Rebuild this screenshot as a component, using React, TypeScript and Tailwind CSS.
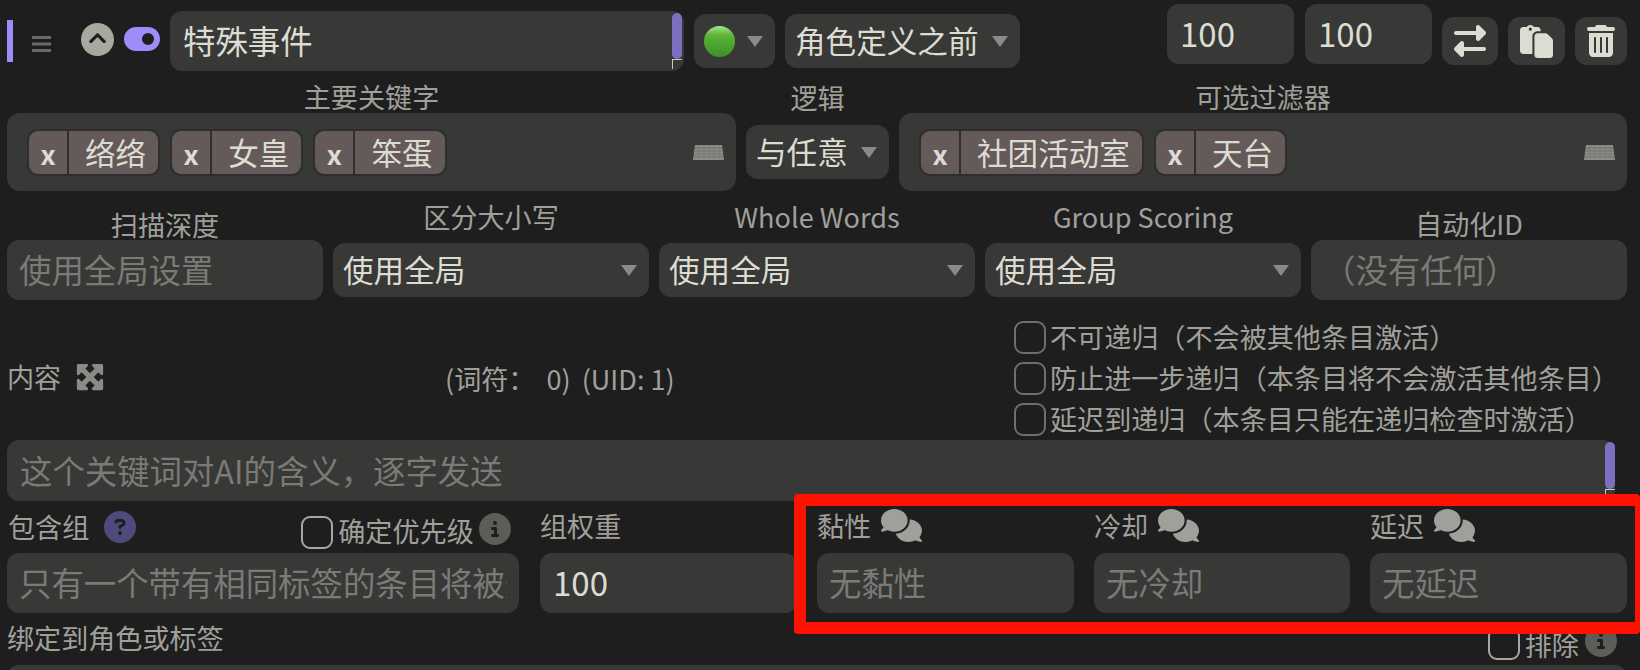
import React from "react";
import { FaCircleChevronUp, FaToggleOn, FaRightLeft, FaPaste, FaTrashCan, FaMaximize, FaCircleQuestion, FaCircleInfo, FaComments } from "react-icons/fa6";

function Arrow() {
  return (
    <svg width="16" height="11" viewBox="0 0 16 11" className="shrink-0">
      <polygon points="0,0 16,0 8,11" fill="#8a8a88" />
    </svg>
  );
}

function Keyboard() {
  return (
    <svg width="31" height="15" viewBox="0 0 31 15" className="shrink-0">
      <polygon points="2,0 29,0 31,15 0,15" fill="#8c8c88" />
      <path d="M2 3h27M2 6h27M1.500 9h28M1 12h29" stroke="#6f6f6c" strokeWidth="1" />
      <path d="M6 0v12M11 0v12M16 0v12M21 0v12M26 0v12" stroke="#777774" strokeWidth="0.700" />
    </svg>
  );
}

function Chip({ text }: { text: string }) {
  return (
    <div className="flex h-[43px] rounded-[9px] bg-[#645a5a] ring-2 ring-[#2e2e2e] text-[#dcdcd2] text-[30.6px] leading-[43px] overflow-hidden">
      <span className="w-[40px] border-r-2 border-[#2e2e2e] flex items-center justify-center font-bold text-[27px] pt-[3px]">x</span>
      <span className="pl-[16px] pr-[12px]">{text}</span>
    </div>
  );
}

function TagBox({ chips, width }: { chips: string[]; width: string }) {
  return (
    <div className={`${width} h-[78px] rounded-[13px] bg-[#383836] flex items-center gap-[14px] pl-[22px] pr-[12px]`}>
      {chips.map((c) => (
        <Chip key={c} text={c} />
      ))}
      <div className="ml-auto">
        <Keyboard />
      </div>
    </div>
  );
}

function Select({ text }: { text: string }) {
  return (
    <div className="w-[316px] h-[54px] mb-[3px] rounded-[12px] bg-[#383836] flex items-center justify-between pl-[10px] pr-[12px] text-[30.6px] text-[#dcdcd2]">
      <span>{text}</span>
      <Arrow />
    </div>
  );
}

function Check({ bright }: { bright?: boolean }) {
  return (
    <span className={`block shrink-0 w-[32px] h-[33px] rounded-[9px] border-2 ${bright ? "border-[#a8a8a2]" : "border-[#6e6e6a]"}`} />
  );
}

function Field({ text, className }: { text: string; className: string }) {
  return (
    <div className={`h-[60px] rounded-[12px] bg-[#383836] px-[12px] text-[32.4px] text-[#7a7a76] ${className}`}>
      <div className="h-[60px] leading-[58px] whitespace-nowrap overflow-hidden">{text}</div>
    </div>
  );
}

function TimedHeader({ label }: { label: string }) {
  return (
    <div className="h-[52px] flex items-start text-[#a0a09a]">
      <span className="mt-[7px] leading-[36px]">{label}</span>
      <FaComments size={41} className="ml-[10px] mt-[4px] text-[#a0a09a]" />
    </div>
  );
}

export default function App() {
  return (
    <div className="relative w-[1640px] h-[670px] overflow-hidden bg-[#1e1e1e] font-['Noto_Sans_CJK_SC','Noto_Sans',sans-serif] text-[#a0a09a] text-[27.1px]">
      {/* row 1 */}
      <div className="flex items-start h-[75px] pt-[4px] pl-[7px]">
        <div className="w-[6px] h-[42px] mt-[16px] bg-[#a08cf8]" />
        <svg width="19" height="16" viewBox="0 0 19 16" className="ml-[19px] mt-[32px]">
          <path d="M0 1.500h19M0 8h19M0 14.500h19" stroke="#6b6b68" strokeWidth="3" />
        </svg>
        <FaCircleChevronUp size={33} className="ml-[30px] mt-[19px] text-[#a8a8a0]" />
        <FaToggleOn size={36} className="ml-[10px] mt-[17px] text-[#a08cf8]" />
        <div className="relative ml-[10px] mt-[7px] w-[514px] h-[60px] rounded-[12px] bg-[#383836] pl-[13px] text-[32.4px] leading-[58px] text-[#dcdcd2]">
          <span>特殊事件</span>
          <div className="absolute right-[2px] top-[2px] w-[10px] h-[46px] rounded-full bg-[#7c6fbf]" />
          <div className="absolute right-[2px] top-[48px] w-[10px] h-[10px] border-l border-t border-[#c8c8c0]" />
        </div>
        <div className="ml-[10px] mt-[10px] w-[81px] h-[54px] rounded-[12px] bg-[#383836] flex items-center pl-[10px] gap-[12px]">
          <svg width="31" height="31" viewBox="0 0 31 31" className="shrink-0">
            <defs>
              <linearGradient id="g" x1="0" y1="0" x2="0" y2="1">
                <stop offset="0" stopColor="#a4e585" />
                <stop offset="0.300" stopColor="#5cb437" />
                <stop offset="1" stopColor="#3d8f28" />
              </linearGradient>
            </defs>
            <circle cx="15.500" cy="15.500" r="15.500" fill="url(#g)" />
          </svg>
          <Arrow />
        </div>
        <div className="ml-[10px] mt-[10px] w-[235px] h-[54px] rounded-[12px] bg-[#383836] flex items-center justify-between pl-[10px] pr-[12px] text-[30.6px] text-[#dcdcd2]">
          <span>角色定义之前</span>
          <Arrow />
        </div>
        <div className="ml-[147px] w-[127px] h-[60px] rounded-[12px] bg-[#383836] pl-[13px] text-[33px] leading-[58px] text-[#dcdcd2]">100</div>
        <div className="ml-[11px] w-[127px] h-[60px] rounded-[12px] bg-[#383836] pl-[13px] text-[33px] leading-[58px] text-[#dcdcd2]">100</div>
        <div className="ml-[10px] mt-[13px] w-[56px] h-[48px] rounded-[12px] bg-[#383836] flex items-center justify-center text-[#dcdcd2]">
          <FaRightLeft size={32} />
        </div>
        <div className="ml-[10px] mt-[13px] w-[57px] h-[48px] rounded-[12px] bg-[#383836] flex items-center justify-center text-[#dcdcd2]">
          <FaPaste size={33} />
        </div>
        <div className="ml-[10px] mt-[13px] w-[52px] h-[48px] rounded-[12px] bg-[#383836] flex items-center justify-center text-[#dcdcd2]">
          <FaTrashCan size={32} />
        </div>
      </div>

      {/* row 2 */}
      <div className="flex items-end h-[116px] px-[7px] gap-[10px]">
        <div className="flex flex-col items-center">
          <div className="h-[32px] leading-[32px]">主要关键字</div>
          <TagBox chips={["络络", "女皇", "笨蛋"]} width="w-[729px]" />
        </div>
        <div className="flex flex-col items-center mb-[12px]">
          <div className="h-[50px] leading-[46px]">逻辑</div>
          <div className="w-[143px] h-[54px] rounded-[12px] bg-[#383836] flex items-center justify-between pl-[10px] pr-[12px] text-[30.6px] text-[#dcdcd2]">
            <span>与任意</span>
            <Arrow />
          </div>
        </div>
        <div className="flex flex-col items-center">
          <div className="h-[32px] leading-[32px]">可选过滤器</div>
          <TagBox chips={["社团活动室", "天台"]} width="w-[728px]" />
        </div>
      </div>

      {/* row 3 */}
      <div className="flex items-end h-[109px] px-[7px] gap-[10px]">
        <div className="flex flex-col items-center">
          <div className="h-[30px] leading-[30px]">扫描深度</div>
          <Field text="使用全局设置" className="w-[316px]" />
        </div>
        <div className="flex flex-col items-center">
          <div className="h-[48px] leading-[44px]">区分大小写</div>
          <Select text="使用全局" />
        </div>
        <div className="flex flex-col items-center">
          <div className="h-[48px] leading-[44px]">Whole Words</div>
          <Select text="使用全局" />
        </div>
        <div className="flex flex-col items-center">
          <div className="h-[48px] leading-[44px]">Group Scoring</div>
          <Select text="使用全局" />
        </div>
        <div className="flex flex-col items-center">
          <div className="h-[30px] leading-[28px]">自动化ID</div>
          <Field text="（没有任何）" className="w-[316px]" />
        </div>
      </div>

      {/* row 4 */}
      <div className="flex items-start h-[140px] pl-[7px]">
        <div className="flex items-center w-[438px] mt-[63px] h-[28px]">
          <span>内容</span>
          <FaMaximize size={30} className="ml-[14px] text-[#8a8a86]" />
        </div>
        <div className="flex items-center w-[569px] mt-[63px] h-[32px] gap-[11px]">
          <span>(词符：</span>
          <span>0)</span>
          <span>(UID: 1)</span>
        </div>
        <div className="flex flex-col gap-[8px] mt-[21px]">
          <div className="flex items-center gap-[4px] h-[33px]">
            <Check />
            <span>不可递归（不会被其他条目激活）</span>
          </div>
          <div className="flex items-center gap-[4px] h-[33px]">
            <Check />
            <span>防止进一步递归（本条目将不会激活其他条目）</span>
          </div>
          <div className="flex items-center gap-[4px] h-[33px]">
            <Check />
            <span>延迟到递归（本条目只能在递归检查时激活）</span>
          </div>
        </div>
      </div>

      {/* row 5: content */}
      <div className="relative ml-[7px] w-[1608px] h-[61px] rounded-[12px] bg-[#383836] pl-[13px] text-[32.4px] leading-[60px] text-[#7a7a76]">
        <span>这个关键词对AI的含义，逐字发送</span>
        <div className="absolute right-0 top-[2px] w-[10px] h-[47px] rounded-full bg-[#7c6fbf]" />
        <div className="absolute right-0 top-[49px] w-[10px] h-[10px] border-l border-t border-[#c8c8c0]" />
      </div>

      {/* row 6 */}
      <div className="flex pl-[7px]">
        <div className="w-[512px]">
          <div className="h-[52px] flex items-start">
            <span className="ml-[1px] mt-[8px] leading-[36px]">包含组</span>
            <FaCircleQuestion size={32} className="ml-[15px] mt-[10px] text-[#4e4a7c]" />
            <div className="ml-[165px] mt-[15px]">
              <Check bright />
            </div>
            <span className="ml-[5px] mt-[12px] leading-[36px]">确定优先级</span>
            <FaCircleInfo size={32} className="ml-[5px] mt-[12px] text-[#5c5c58]" />
          </div>
          <Field text="只有一个带有相同标签的条目将被选中" className="w-[512px]" />
        </div>
        <div className="ml-[21px] w-[257px]">
          <div className="h-[52px] leading-[50px]">组权重</div>
          <div className="h-[60px] rounded-[12px] bg-[#383836] pl-[13px] text-[33px] leading-[58px] text-[#dcdcd2]">100</div>
        </div>
        <div className="ml-[20px] w-[257px]">
          <TimedHeader label="黏性" />
          <Field text="无黏性" className="w-full" />
        </div>
        <div className="ml-[20px] w-[256px]">
          <TimedHeader label="冷却" />
          <Field text="无冷却" className="w-full" />
        </div>
        <div className="ml-[20px] w-[257px]">
          <TimedHeader label="延迟" />
          <Field text="无延迟" className="w-full" />
        </div>
      </div>

      {/* row 7 */}
      <div className="flex items-start h-[52px] pl-[7px]">
        <span className="mt-[7px] leading-[36px]">绑定到角色或标签</span>
        <div className="ml-[1264px] mt-[14px]">
          <Check bright />
        </div>
        <span className="ml-[5px] mt-[14px] leading-[36px]">排除</span>
        <FaCircleInfo size={32} className="ml-[6px] mt-[12px] text-[#5c5c58]" />
      </div>
      <div className="ml-[7px] w-[1620px] h-[60px] rounded-[12px] bg-[#383836]" />

      {/* annotation */}
      <div className="absolute left-[794px] top-[494px] w-[846px] h-[140px] rounded-[4px] border-y-[12px] border-l-[12px] border-r-[5px] border-[#ff1200]" />
    </div>
  );
}
